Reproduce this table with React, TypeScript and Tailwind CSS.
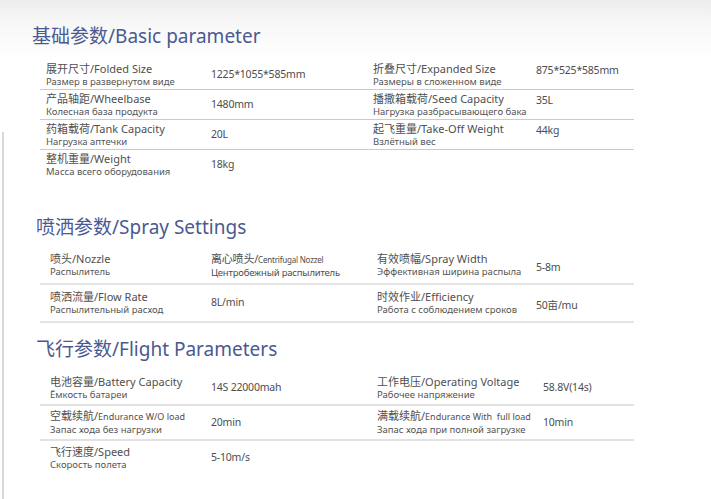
import React from "react";

type Spec = {
  zh: string;
  en: string;
  enSmall?: boolean;
  ru: string;
  value: React.ReactNode;
};

type Row = {
  left: Spec;
  right?: Spec;
  h: string;
};

const basicRows: Row[] = [
  {
    h: "h-[30px]",
    left: { zh: "展开尺寸", en: "Folded Size", ru: "Размер в развернутом виде", value: "1225*1055*585mm" },
    right: { zh: "折叠尺寸", en: "Expanded Size", ru: "Размеры в сложенном виде", value: "875*525*585mm" },
  },
  {
    h: "h-[30px]",
    left: { zh: "产品轴距", en: "Wheelbase", ru: "Колесная база продукта", value: "1480mm" },
    right: { zh: "播撒箱载荷", en: "Seed Capacity", ru: "Нагрузка разбрасывающего бака", value: "35L" },
  },
  {
    h: "h-[30px]",
    left: { zh: "药箱载荷", en: "Tank Capacity", ru: "Нагрузка аптечки", value: "20L" },
    right: { zh: "起飞重量", en: "Take-Off Weight", ru: "Взлётный вес", value: "44kg" },
  },
  {
    h: "h-[30px]",
    left: { zh: "整机重量", en: "Weight", ru: "Масса всего оборудования", value: "18kg" },
  },
];

const sprayRows: Row[] = [
  {
    h: "h-[38px]",
    left: {
      zh: "喷头",
      en: "Nozzle",
      ru: "Распылитель",
      value: (
        <div className="flex flex-col">
          <span className="text-[11px] leading-[13px]">
            离心喷头/<span className="text-[8px]">Centrifugal Nozzel</span>
          </span>
          <span className="text-[9.5px] leading-[13px]">Центробежный распылитель</span>
        </div>
      ),
    },
    right: { zh: "有效喷幅", en: "Spray Width", ru: "Эффективная ширина распыла", value: <span className="mt-[5px] block">5-8m</span> },
  },
  {
    h: "h-[38px]",
    left: { zh: "喷洒流量", en: "Flow Rate", ru: "Распылительный расход", value: "8L/min" },
    right: { zh: "时效作业", en: "Efficiency", ru: "Работа с соблюдением сроков", value: <span className="mt-[6px] block">50亩/mu</span> },
  },
];

const flightRows: Row[] = [
  {
    h: "h-[34px]",
    left: { zh: "电池容量", en: "Battery Capacity", ru: "Ёмкость батареи", value: "14S 22000mah" },
    right: { zh: "工作电压", en: "Operating Voltage", ru: "Рабочее напряжение", value: "58.8V(14s)" },
  },
  {
    h: "h-[35px]",
    left: { zh: "空载续航", en: "Endurance W/O load", enSmall: true, ru: "Запас хода без нагрузки", value: "20min" },
    right: { zh: "满载续航", en: "Endurance With  full load", enSmall: true, ru: "Запас хода при полной загрузке", value: "10min" },
  },
  {
    h: "h-[34px]",
    left: { zh: "飞行速度", en: "Speed", ru: "Скорость полета", value: "5-10m/s" },
  },
];

const Label = ({ spec }: { spec: Spec }) => (
  <div className="flex flex-col text-[#4f4f4f]">
    <span className="text-[11px] leading-[13px] whitespace-pre">
      {spec.zh}/{spec.enSmall ? <span className="text-[9px]">{spec.en}</span> : spec.en}
    </span>
    <span className="text-[9.5px] leading-[13px] text-[#555]">{spec.ru}</span>
  </div>
);

type TableProps = {
  rows: Row[];
  cols: string;
  line: string;
  rightTop?: boolean;
};

const SpecTable = ({ rows, cols, line, rightTop }: TableProps) => (
  <div className="w-[594px] ml-[40px]">
    {rows.map((row, i) => (
      <div
        key={i}
        className={`${row.h} grid ${cols} items-center ${i < rows.length - 1 || row.right ? line : ""}`}
      >
        <Label spec={row.left} />
        <div className="text-[10.5px] tracking-[-0.2px] text-[#4d4d4d]">{row.left.value}</div>
        {row.right ? <Label spec={row.right} /> : <div />}
        {row.right ? (
          <div
            className={`text-[10.5px] tracking-[-0.2px] text-[#4d4d4d] ${rightTop ? "self-start pt-[3px]" : ""}`}
          >
            {row.right.value}
          </div>
        ) : (
          <div />
        )}
      </div>
    ))}
  </div>
);

const Title = ({ children, cls }: { children: React.ReactNode; cls: string }) => (
  <h2 className={`text-[19px] leading-[26px] font-normal text-[#4b5990] ${cls}`}>{children}</h2>
);

export default function App() {
  return (
    <div
      className="w-[711px] h-[499px] overflow-hidden flex bg-[linear-gradient(180deg,#ececee_0px,#f6f6f7_20px,#fcfcfc_45px,#ffffff_60px)]"
      style={{ fontFamily: '"Noto Sans", "Noto Sans CJK SC", sans-serif' }}
    >
      <div className="w-[2px] ml-[2px] mt-[132px] bg-[#d4d8df]" />
      <div className="flex-1 -ml-[4px]">
        <Title cls="ml-[32px] mt-[23px]">基础参数/Basic parameter</Title>
        <div className="mt-[11px]">
          <SpecTable
            rows={basicRows}
            cols="grid-cols-[165px_162px_163px_1fr] pl-[6px]"
            line="border-b border-[#cbcbcb]"
            rightTop
          />
        </div>

        <Title cls="ml-[36px] mt-[34px]">喷洒参数/Spray Settings</Title>
        <div className="mt-[7px]">
          <SpecTable
            rows={sprayRows}
            cols="grid-cols-[161px_166px_159px_1fr] pl-[10px]"
            line="border-b-2 border-[#e4e4e4]"
          />
        </div>

        <Title cls="ml-[36px] mt-[13px]">飞行参数/Flight Parameters</Title>
        <div className="mt-[10px]">
          <SpecTable
            rows={flightRows}
            cols="grid-cols-[161px_166px_166px_1fr] pl-[10px]"
            line="border-b-2 border-[#e2e2e2]"
          />
        </div>
      </div>
    </div>
  );
}
